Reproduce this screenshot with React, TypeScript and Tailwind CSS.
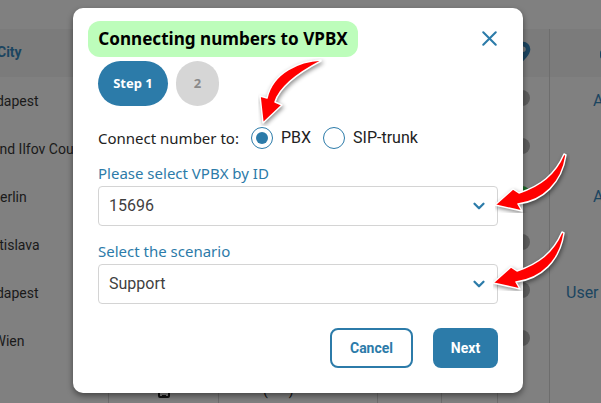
import { ChevronDown, X } from 'lucide-react'

const CITIES = ['Budapest', 'Bucharest and Ilfov County', 'Berlin', 'Bratislava', 'Budapest', 'Wien']

const NOTES = [
  { text: 'A', width: 'w-[8px]' },
  { text: '', width: 'w-[8px]' },
  { text: 'A', width: 'w-[8px]' },
  { text: '', width: 'w-[8px]' },
  { text: 'User name', width: 'w-[35px]' },
  { text: '', width: 'w-[8px]' },
]

// red callout arrows, all hand traced from the screenshot
function CurvedArrow({ className, d, box }: { className: string; d: string; box: string }) {
  return (
    <svg viewBox={box} className={className}>
      <path
        d={d}
        fill="#ff0000"
        stroke="#ffffff"
        strokeWidth="1.5"
        strokeLinejoin="round"
        style={{ filter: 'drop-shadow(1px 2px 2px rgba(0,0,0,.45))' }}
      />
    </svg>
  )
}

const SIDE_ARROW = 'M69 1 C60 22 45 33 24 40 L18 36 L0 52 L27 58 L23 51 C48 48 67 30 71 2 Z'
const TOP_ARROW = 'M63 2 C42 3 15 14 9 40 L2 38 L5 65 L24 47 L17 44 C22 28 42 14 63 3 Z'

function Background() {
  return (
    <div className="flex h-[403px] w-[601px] flex-col overflow-hidden bg-[#808080] font-['Roboto',sans-serif]">
      <div className="h-[29px]" />
      <div className="flex h-[48px] items-center bg-[#7b7b7b] pb-[2px]">
        <span className="-ml-[3px] text-sm font-bold text-[#1b4560]">City</span>
      </div>
      {CITIES.map((city, i) => (
        <div key={i} className="flex h-[48px] items-center justify-between">
          <span className="-ml-[91px] w-[200px] text-center text-sm whitespace-nowrap text-[#1a1a1a]">{city}</span>
          <span className={`overflow-hidden text-base whitespace-nowrap text-[#1b4560] ${NOTES[i].width}`}>
            {NOTES[i].text}
          </span>
        </div>
      ))}
    </div>
  )
}

function Field({ label, value }: { label: string; value: string }) {
  return (
    <div className="flex flex-col">
      <label className="h-[23px] font-['Noto_Sans',sans-serif] text-[15px] leading-[20px] text-[#2c7ba9]">{label}</label>
      <div className="flex h-[40px] items-center justify-between rounded-[4px] border border-[#d4d4d4] pl-[10px] pr-[9px]">
        <span className="font-['Roboto',sans-serif] text-base text-[#3f3f3f]">{value}</span>
        <ChevronDown size={18} strokeWidth={3} className="text-[#2c7ba9]" />
      </div>
    </div>
  )
}

export default function App() {
  return (
    <div className="relative h-[403px] w-[601px] overflow-hidden">
      <Background />

      {/* table rules and cells peeking out round the modal */}
      <div className="absolute left-[549px] top-[29px] h-[374px] w-px bg-[#6d6d6d]" />
      {[108, 218, 377, 441, 497].map((x) => (
        <div key={x} className="absolute top-[385px] h-[18px] w-px bg-[#6d6d6d]" style={{ left: x }} />
      ))}
      <div className="absolute left-[158px] top-[390px] flex h-[8px] w-[12px] items-end justify-center rounded-[2px] border-2 border-[#111] bg-[#808080]">
        <div className="h-px w-[4px] bg-[#111]" />
      </div>
      <span className="absolute left-[263px] top-[380px] font-['Roboto',sans-serif] text-sm whitespace-pre text-[#111]">(      )</span>
      <svg viewBox="0 0 24 24" className="absolute left-[512px] top-[38px] h-[26px] w-[22px]">
        <path d="M12 2a8 8 0 0 0-8 8c0 6 8 13 8 13s8-7 8-13a8 8 0 0 0-8-8Zm0 11a3 3 0 1 1 0-6 3 3 0 0 1 0 6Z" fill="#1b4560" />
      </svg>
      <div className="absolute left-[600px] top-[50px] h-[9px] w-[6px] rounded-full bg-[#1b4560]" />
      {[98, 146, 194, 242, 290, 338].map((y) => (
        <div
          key={y}
          className={`absolute left-[514px] size-[16px] rounded-full ${y === 194 ? 'bg-[#1d6b2a]' : 'bg-[#5c5c5c]'}`}
          style={{ top: y - 8 }}
        />
      ))}

      {/* modal */}
      <div className="absolute left-[73px] top-[8px] flex h-[385px] w-[450px] flex-col rounded-[10px] bg-white shadow-[0_3px_6px_rgba(0,0,0,0.45)]">
        <div className="relative">
          <h2 className="ml-[15px] mt-[13px] flex h-[36px] w-[270px] items-center justify-center rounded-[12px] bg-[#bdfdbb] font-['Noto_Sans',sans-serif] text-[17.1px] font-bold whitespace-nowrap text-black">
            Connecting numbers to VPBX
          </h2>
          <X size={25} strokeWidth={2} className="absolute left-[404px] top-[18px] text-[#2c7ba9]" />
        </div>

        <div className="ml-[25px] mt-[4px] flex gap-[8px] font-['Noto_Sans',sans-serif] text-[13px] font-bold">
          <div className="flex h-[45px] w-[70px] items-center justify-center rounded-full bg-[#2c7ba9] text-white">Step 1</div>
          <div className="flex h-[45px] w-[43px] items-center justify-center rounded-full bg-[#d6d6d6] text-[#8a8a8a]">2</div>
        </div>

        <div className="ml-[25px] mt-[20px] flex h-[24px] items-center">
          <span className="w-[153px] font-['Noto_Sans',sans-serif] text-[15px] whitespace-nowrap text-[#222]">Connect number to:</span>
          <span className="mr-[8px] flex size-[22px] items-center justify-center rounded-full border-[1.5px] border-[#2c7ba9]">
            <span className="size-[12px] rounded-full bg-[#2c7ba9]" />
          </span>
          <span className="mr-[12px] font-['Roboto',sans-serif] text-base text-[#222]">PBX</span>
          <span className="mr-[8px] size-[22px] rounded-full border-[1.5px] border-[#2c7ba9]" />
          <span className="font-['Roboto',sans-serif] text-base text-[#222]">SIP-trunk</span>
        </div>

        <div className="mx-[25px] mt-[13px] flex flex-col gap-[15px]">
          <Field label="Please select VPBX by ID" value="15696" />
          <Field label="Select the scenario" value="Support" />
        </div>

        <div className="mr-[25px] mt-[24px] flex justify-end gap-[20px] font-['Roboto',sans-serif] text-sm font-bold">
          <button type="button" className="h-[40px] w-[83px] rounded-[8px] border-2 border-[#2c7ba9] text-[#2c7ba9]">Cancel</button>
          <button type="button" className="h-[40px] w-[65px] rounded-[8px] bg-[#2c7ba9] text-white">Next</button>
        </div>
      </div>

      {/* annotation arrows */}
      <CurvedArrow box="0 0 75 60" d={SIDE_ARROW} className="absolute left-[495px] top-[153px] h-[60px] w-[75px]" />
      <CurvedArrow box="0 0 75 60" d={SIDE_ARROW} className="absolute left-[493px] top-[231px] h-[60px] w-[75px]" />
      <CurvedArrow box="0 0 70 68" d={TOP_ARROW} className="absolute left-[258px] top-[58px] h-[68px] w-[70px]" />
    </div>
  )
}
